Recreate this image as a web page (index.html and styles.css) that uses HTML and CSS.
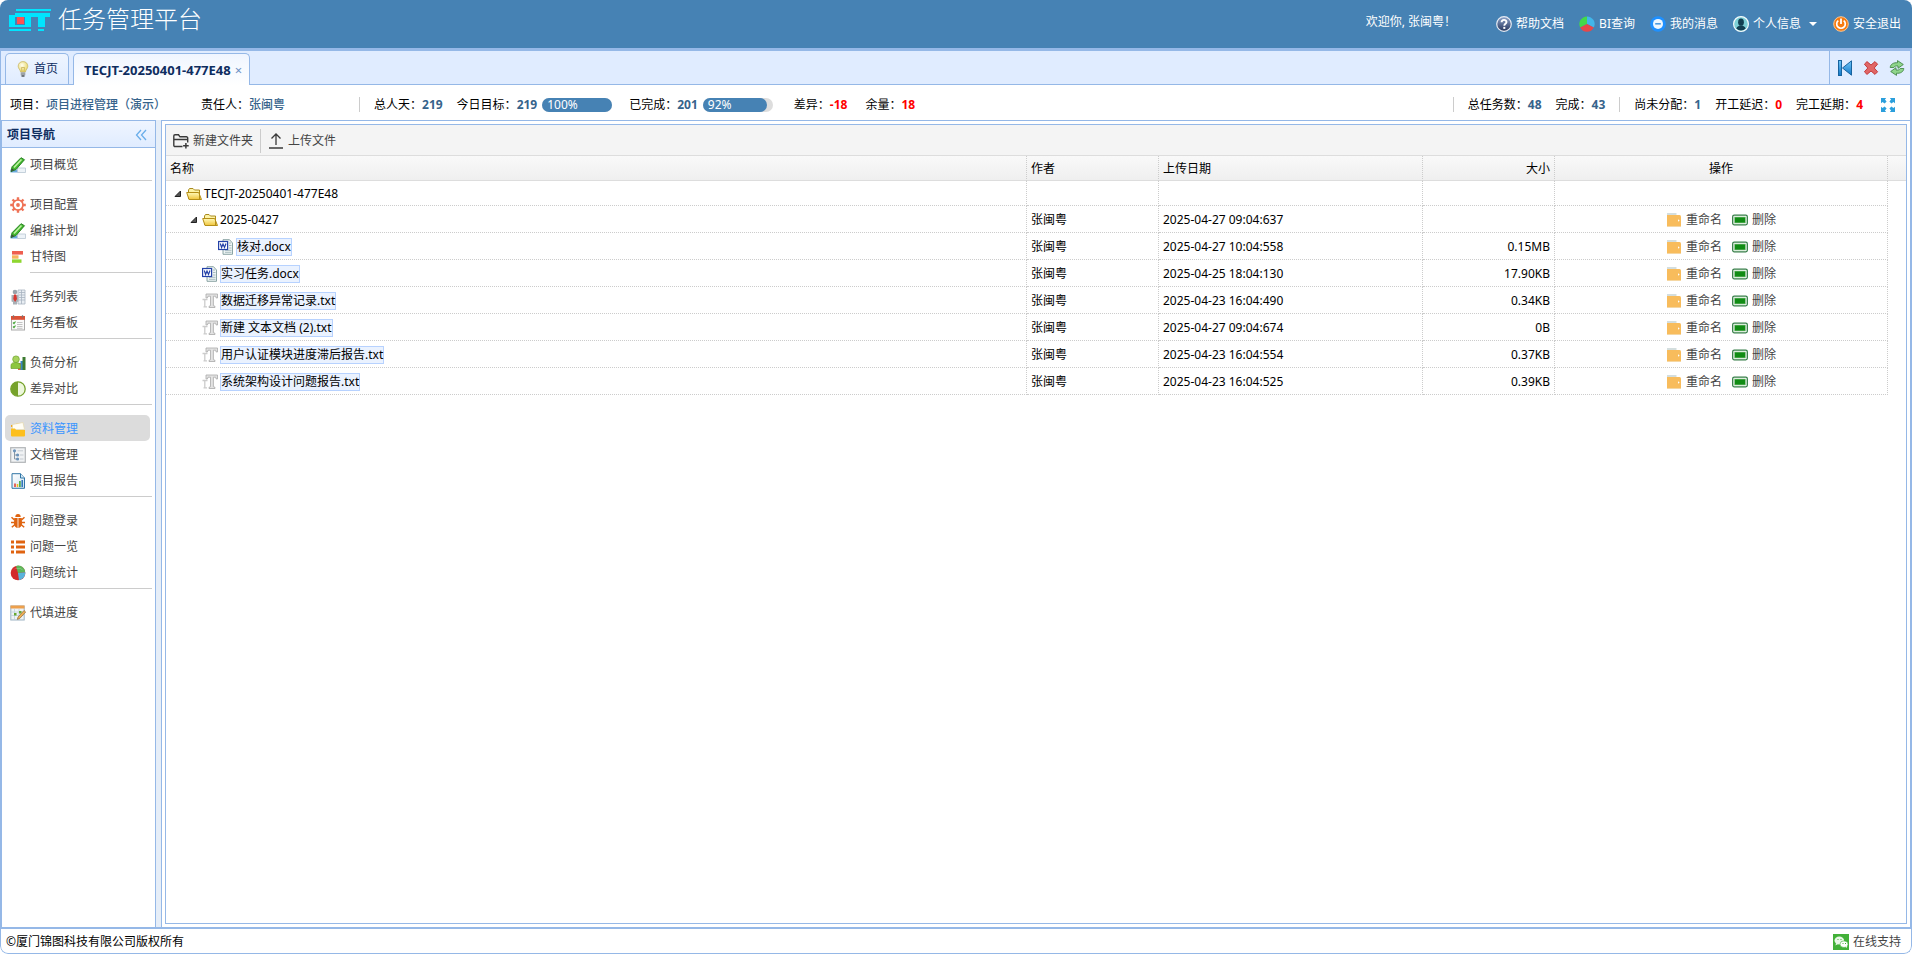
FILE: index.html
```html
<!DOCTYPE html>
<html lang="zh-CN">
<head>
<meta charset="utf-8">
<title>任务管理平台</title>
<link rel="stylesheet" href="styles.css">
</head>
<body>
<svg class="sprite" aria-hidden="true">
  <defs>
    <linearGradient id="g-folder" x1="0" y1="0" x2="0" y2="1"><stop offset="0" stop-color="#fff9b8"/><stop offset="1" stop-color="#f0c53c"/></linearGradient>
    <linearGradient id="g-blue" x1="0" y1="0" x2="0" y2="1"><stop offset="0" stop-color="#6fc6f8"/><stop offset="1" stop-color="#1478c8"/></linearGradient>
    <linearGradient id="g-steel" x1="0" y1="0" x2="0" y2="1"><stop offset="0" stop-color="#8fa5cc"/><stop offset="1" stop-color="#26355c"/></linearGradient>
    <linearGradient id="g-paper" x1="0" y1="0" x2="1" y2="1"><stop offset="0" stop-color="#ffffff"/><stop offset="1" stop-color="#cfe3f2"/></linearGradient>
    <radialGradient id="g-bulb" cx=".4" cy=".35" r=".7"><stop offset="0" stop-color="#fffef0"/><stop offset="1" stop-color="#e6d45a"/></radialGradient>
  </defs>
  <symbol id="i-help" viewBox="0 0 16 16"><circle cx="8" cy="8" r="7.3" fill="url(#g-steel)" stroke="#e6ebf3" stroke-width="1.2"/><path d="M5.6 6.3c0-3.2 4.9-3.2 4.9-.2 0 1.7-2.2 1.8-2.2 3.6" fill="none" stroke="#fff" stroke-width="1.9"/><rect x="7.3" y="10.9" width="2" height="2" fill="#fff"/></symbol>
  <symbol id="i-bi" viewBox="0 0 16 16"><path d="M8 8V.5A7.5 7.5 0 0 0 1.2 11.5z" fill="#43d94b"/><path d="M8 8V.5a7.5 7.5 0 0 1 6.8 11z" fill="#41b6ea"/><path d="M8 8l6.8 3.5a7.6 7.6 0 0 1-13.6 0z" fill="#e5484a"/></symbol>
  <symbol id="i-msg" viewBox="0 0 16 16"><circle cx="8" cy="8" r="7.8" fill="#1e90ff"/><circle cx="8" cy="7.900" r="5" fill="#eef7ff"/><rect x="5.2" y="7" width="5.6" height="1.6" fill="#4c9be0"/></symbol>
  <symbol id="i-user" viewBox="0 0 16 16"><circle cx="8" cy="8" r="7.4" fill="#7ccfd6" stroke="#f4fbfc" stroke-width="1.2"/><ellipse cx="8" cy="6.2" rx="2.9" ry="3.6" fill="#123f52"/><path d="M3.3 12.6c.6-2.1 2.4-2.2 3.3-3h2.8c.9.8 2.7.9 3.3 3-2.5 2.6-6.900 2.6-9.400 0z" fill="#123f52"/></symbol>
  <symbol id="i-power" viewBox="0 0 16 16"><circle cx="8" cy="8" r="7.3" fill="#f77b10" stroke="#fbc793"/><path d="M5.300 4.600a4.300 4.300 0 1 0 5.400 0" fill="none" stroke="#fff" stroke-width="1.700"/><path d="M8 2.500v5.500" stroke="#fff" stroke-width="1.800"/></symbol>
  <symbol id="i-bulb" viewBox="0 0 16 16"><path d="M8 .6c-3 0-4.800 2.100-4.800 4.600C3.200 7.500 5.200 8.600 5.600 11h4.800c.4-2.400 2.400-3.500 2.400-5.800C12.800 2.700 11 .6 8 .6z" fill="url(#g-bulb)" stroke="#c9b96a" stroke-width=".8"/><path d="M7 10.500L6.500 6.500h3L9 10.500" fill="none" stroke="#c4a94a" stroke-width=".7"/><rect x="5.700" y="11.300" width="4.600" height="3" fill="#9da3a8"/><rect x="6.500" y="14.300" width="3" height="1.400" fill="#454a50"/></symbol>
  <symbol id="i-first" viewBox="0 0 16 16"><rect x="1.500" y=".5" width="3" height="15" fill="url(#g-blue)" stroke="#17639e"/><path d="M14.500.8v14.400L5.500 8z" fill="url(#g-blue)" stroke="#17639e"/></symbol>
  <symbol id="i-cross" viewBox="0 0 16 16"><path d="M4 1.600L8 5l4-3.400 2.600 2.600L11.200 8l3.400 3.800-2.600 2.600L8 11l-4 3.400-2.600-2.600L4.800 8 1.400 4.200z" fill="#e06666" stroke="#c43c3c" stroke-linejoin="round"/></symbol>
  <symbol id="i-refresh" viewBox="0 0 16 16"><path d="M1.200 7.500C1.500 4 4.800 2.400 8.500 2.800L8.500.6 14.300 4.500 9 8.300V6C6.800 5.700 5.500 6.200 4.800 7.500z" fill="#8fd58b" stroke="#46884a" stroke-width=".9"/><path d="M14.800 8.500c-.3 3.500-3.600 5.100-7.300 4.700v2.200L1.700 11.500 7 7.700V10c2.200.3 3.500-.2 4.200-1.500z" fill="#8fd58b" stroke="#46884a" stroke-width=".9"/></symbol>
  <symbol id="i-expand" viewBox="0 0 16 16"><path d="M1 1h5.200L4.900 2.600 6.600 4.600 4.600 6.600 2.600 4.900 1 6.200zM15 1v5.200l-1.600-1.300-2 1.700-2-2 1.700-2L9.800 1zM1 15V9.800l1.600 1.300 2-1.700 2 2-1.700 2L6.200 15zM15 15H9.800l1.300-1.600-1.700-2 2-2 2 1.700L15 9.800z" fill="#2b9fdc"/></symbol>
  <symbol id="i-collapse" viewBox="0 0 12 12"><path d="M6 1L1.500 6 6 11M11 1L6.500 6l4.500 5" fill="none" stroke="#6aaeea" stroke-width="1.300"/></symbol>
  <symbol id="i-pencil" viewBox="0 0 16 16"><path d="M.5 12.500h9v3h-9z" fill="#6ca9de"/><path d="M7.500 11h8v4.500h-8z" fill="#edf3f8" stroke="#b9c7d3" stroke-width=".8"/><path d="M11 .7l3.500 2L6 12.500 1 14.600l1-4.800z" fill="#43b82f" stroke="#1f7a1a" stroke-width=".9"/><path d="M11.500 2.500L4 10.500" stroke="#c0f2a4" stroke-width="1.500"/><path d="M1 14.600l1-3 2.200 1.400z" fill="#444"/></symbol>
  <symbol id="i-gear" viewBox="0 0 16 16"><circle cx="8" cy="8" r="5" fill="none" stroke="#ef7256" stroke-width="1.700"/><circle cx="8" cy="8" r="1.900" fill="#ef7256"/><path d="M8 .2v3M8 12.800v3M.2 8h3M12.800 8h3M2.500 2.500l2 2M11.500 11.500l2 2M2.500 13.500l2-2M11.500 4.500l2-2" stroke="#ef7256" stroke-width="2.400"/></symbol>
  <symbol id="i-gantt" viewBox="0 0 16 16"><rect x="2" y="2" width="11" height="3.600" fill="#ee5f50"/><rect x="2" y="6.300" width="6.500" height="3.400" fill="#f6b45e"/><rect x="2" y="10.400" width="9.500" height="3.400" fill="#8ed630"/></symbol>
  <symbol id="i-list" viewBox="0 0 16 16"><path d="M8 1h7v14H8z" fill="#e9eef3" stroke="#a8b4c0" stroke-width=".8"/><path d="M9 3.500h6M9 6h6M9 8.500h6M9 11h6M11.500 1v14" stroke="#a8b4c0" stroke-width=".8"/><circle cx="5" cy="3" r="2.300" fill="#9aa3ab"/><path d="M1.500 6h7v6.500l-1.500.5v2.500H3V13l-1.500-.5z" fill="#a9b0b6"/><path d="M4 5.500h2.200L7 10l-1.900 3L3.300 10z" fill="#d9362f"/></symbol>
  <symbol id="i-board" viewBox="0 0 16 16"><rect x="1.500" y="1.500" width="13" height="13.500" fill="#fafafa" stroke="#a9a9a9"/><rect x="1" y="1" width="14" height="3.800" fill="#dc5237"/><path d="M3.500.3v2.200M12.500.3v2.200" stroke="#777" stroke-width="1.300"/><path d="M3 7.500l1 1 1.500-2M3 11.500l1 1 1.500-2" fill="none" stroke="#48a63a" stroke-width="1.200"/><path d="M7 7.500h5.500M7 9.500h5.500M7 11.500h5.500M7 13.300h5.500" stroke="#c3c3c3"/></symbol>
  <symbol id="i-load" viewBox="0 0 16 16"><rect x="8" y="8" width="3" height="7" fill="#db6a49"/><rect x="10.500" y="6" width="2.500" height="9" fill="#3986c4"/><rect x="12.500" y="2" width="3" height="13" fill="#3c7a30"/><circle cx="6" cy="4.200" r="3.300" fill="#a7d35c" stroke="#6da22d" stroke-width=".7"/><path d="M1 13.500V10.500C1 8.200 3 7.500 5.500 7.500s5 .7 5 3v3z" fill="#8dc63f" stroke="#6da22d" stroke-width=".7"/></symbol>
  <symbol id="i-diff" viewBox="0 0 16 16"><circle cx="8" cy="8" r="7.200" fill="#edf7dc" stroke="#76a22b" stroke-width="1.300"/><path d="M8 .8a7.200 7.200 0 0 0 0 14.400z" fill="#76a22b"/></symbol>
  <symbol id="i-docs" viewBox="0 0 16 16"><path d="M1 4h4l1.500-1.500H12V6H1z" fill="#f3a81c"/><path d="M2.500 3.500L13 1.500l1.500 7h-12z" fill="#fffdf4" stroke="#e5d8ac" stroke-width=".7"/><path d="M1 7.500h4l1 1.500h9v5.500a1 1 0 0 1-1 1H2a1 1 0 0 1-1-1z" fill="#fdbf1d"/></symbol>
  <symbol id="i-tree" viewBox="0 0 16 16"><rect x=".7" y=".7" width="14.600" height="14.600" fill="#f0f2f4" stroke="#b1b4b7" stroke-width="1.200"/><path d="M4.500 4v8H7M4.500 8H7" fill="none" stroke="#8b98a5"/><circle cx="4.500" cy="3.800" r="1.600" fill="#6b93ba"/><circle cx="7.600" cy="8" r="1.600" fill="#6b93ba"/><circle cx="7.600" cy="12" r="1.600" fill="#6b93ba"/><path d="M7.500 3.800H13M10 8h3.500M10 12h3.500" stroke="#c4cad0"/></symbol>
  <symbol id="i-report" viewBox="0 0 16 16"><path d="M2 .7h8.500L14.500 5v10.300H2z" fill="url(#g-paper)" stroke="#3176a6"/><path d="M10.500.7V5h4" fill="#d8e9f5" stroke="#3176a6"/><path d="M5 14v-3.500" stroke="#e0362c" stroke-width="1.500"/><path d="M7.500 14V11" stroke="#f0bd19" stroke-width="1.500"/><path d="M9.900 14V8" stroke="#36a335" stroke-width="1.500"/><path d="M12.200 14V7" stroke="#2c6fb8" stroke-width="1.500"/></symbol>
  <symbol id="i-bug" viewBox="0 0 16 16"><path d="M5.300 4a2.700 3 0 0 1 5.400 0zM4.200 5h3.400v10C5.500 14.700 4 13 4 10.500zM8.400 5h3.400l.2 5.500c0 2.500-1.500 4.200-3.600 4.500z" fill="#df6411"/><path d="M1.500 4.200L4.500 7M1 9.500h3.500M1.800 14.200L5 11.500M14.500 4.200L11.500 7M15 9.500h-3.500M14.200 14.200L11 11.500" stroke="#df6411" stroke-width="1.500"/></symbol>
  <symbol id="i-issues" viewBox="0 0 16 16"><path d="M1 1.500h3v3H1zM6 1.500h9v3H6zM1 6.500h3v3H1zM6 6.500h9v3H6zM1 11.500h3v3H1zM6 11.500h9v3H6z" fill="#e06310"/></symbol>
  <symbol id="i-pie" viewBox="0 0 16 16"><circle cx="8" cy="8" r="7.300" fill="#d22a2a"/><path d="M8 8L6 .9a7.300 7.300 0 0 1 9.300 6.300z" fill="#5cb85a"/><path d="M8 8l7.300-.8A7.300 7.300 0 0 1 9 15.200z" fill="#59b3dc"/><path d="M2.500 6a6 5 0 0 1 11 0c-2-3-8.500-3.500-11 0z" fill="#fff" opacity=".4"/></symbol>
  <symbol id="i-progress" viewBox="0 0 16 16"><rect x=".8" y="1" width="13.400" height="14" fill="#eef3f6" stroke="#9db3c4"/><rect x=".5" y=".5" width="14" height="3" fill="#eda04c"/><path d="M1 7h13M1 10.500h13M4.500 4v11M9 4v11" stroke="#bed0dd" stroke-width=".8"/><path d="M4 8h2.500v2.500H4zM9 6h2.500v2.500H9z" fill="#66a931"/><path d="M14 5.500l1.700 1.500-6 6.500-2.400.9.700-2.400z" fill="#f0b054" stroke="#8f6a3a" stroke-width=".7"/></symbol>
  <symbol id="i-newfolder" viewBox="0 0 16 16"><path d="M9.500 13.500H2a1.200 1.200 0 0 1-1.200-1.200V3A1.200 1.200 0 0 1 2 1.800h3.500L7 3.800h6.500A1.200 1.200 0 0 1 14.700 5v4.500M1 6.500h13.500" fill="none" stroke="#3a3a3a" stroke-width="1.400"/><path d="M12.900 10v5.600M10.100 12.800h5.600" stroke="#3a3a3a" stroke-width="1.500"/></symbol>
  <symbol id="i-upload" viewBox="0 0 16 16"><path d="M8 12V1M3.500 5.500L8 1l4.500 4.500M1 15h14" fill="none" stroke="#3a3a3a" stroke-width="1.300"/></symbol>
  <symbol id="i-folder" viewBox="0 0 16 16"><path d="M2.500 13V4l1-1.500H7L8.500 4h5v3" fill="#fdf3a5" stroke="#a98a20"/><path d="M.7 6.500h12l2.800 7H3z" fill="url(#g-folder)" stroke="#b58f18"/><path d="M13.500 5v8" stroke="#b58f18"/></symbol>
  <symbol id="i-word" viewBox="0 0 16 16"><path d="M5 .7h6.500L14.500 4v11.300H5z" fill="#eef4f4" stroke="#7e9a9a" stroke-width=".9"/><path d="M11 4h2M11 6.500h2.500M11 9h2.500M7 11.300h6.500M7 13.300h6.500" stroke="#9fb5b9" stroke-width=".9"/><rect x=".6" y="2.500" width="9" height="8" fill="#fff" stroke="#2442a8" stroke-width="1.200"/><path d="M2.300 4.500l1.300 4L5 5l1.500 3.500L8 4.500" fill="none" stroke="#2442a8" stroke-width="1.200"/></symbol>
  <symbol id="i-text" viewBox="0 0 16 16"><path d="M4 1h11.500v4h-1.300l-.5-1.800h-2.300v9.500l1.600.6V14.500H7v-1.200l1.500-.6V3.200H6L5.400 5H4z" fill="#e3e3e3" stroke="#a9a9a9" stroke-width=".8"/><path d="M.5 6.500H5.500M2.800 6.500v7M1.500 13.800h3.500" stroke="#cccccc" stroke-width="1.300"/></symbol>
  <symbol id="i-rename" viewBox="0 0 16 16"><path d="M1 1h9.500v3H1z" fill="#d4dede"/><path d="M1 3h12.500A1.500 1.500 0 0 1 15 4.500V15H1z" fill="#f8bc5c"/><rect x="1" y="14" width="14" height="1" fill="#f5d7a3"/><path d="M12 7.300l1.700 1.200-1.700 1.200z" fill="#fff"/></symbol>
  <symbol id="i-delete" viewBox="0 0 16 16"><rect x=".7" y="3.200" width="14.600" height="9.600" rx="1.500" fill="#fff" stroke="#347d46" stroke-width="1.300"/><rect x="2.500" y="5" width="11" height="6" fill="#118c14" stroke="#9bcf9b" stroke-width=".7"/></symbol>
  <symbol id="i-wechat" viewBox="0 0 16 16"><rect width="16" height="16" fill="#42b038"/><ellipse cx="6.300" cy="6.500" rx="4.800" ry="4" fill="#e9f7e7"/><path d="M3 9l-.5 2.500L5 10z" fill="#e9f7e7"/><ellipse cx="11" cy="10.200" rx="4" ry="3.300" fill="#fff" stroke="#42b038" stroke-width=".6"/><path d="M12.500 12.500l1.500 1.800-.3-2.500z" fill="#fff"/><path d="M4.500 5.500h1M7.500 5.500h1M9.500 9.500h1M12 9.500h1" stroke="#42b038" stroke-width="1.100"/></symbol>
  <symbol id="i-arrow" viewBox="0 0 8 8"><path d="M6.500 1v5.500H1z" fill="#555" stroke="#222"/></symbol>
</svg>

<div class="app">
  <header class="banner">
    <svg class="logo" viewBox="0 0 42 22" aria-hidden="true"><path d="M7 0h35v2H7zM0 20h22v2H0zM0 6h6v10h10V8H6V4h35v4h-5v10h-7V8h-7v10H0zM29 20h6v2h-6z" fill="#00e5ff"/><rect x="8" y="8" width="7" height="7" fill="#ff5252"/></svg>
    <h1 class="brand">任务管理平台</h1>
    <span class="welcome">欢迎你, 张闽粤！</span>
    <nav class="links">
      <a href="#help"><svg class="icon"><use href="#i-help"/></svg>帮助文档</a>
      <a href="#bi"><svg class="icon"><use href="#i-bi"/></svg>BI查询</a>
      <a href="#msg"><svg class="icon"><use href="#i-msg"/></svg>我的消息</a>
      <a href="#me"><svg class="icon"><use href="#i-user"/></svg>个人信息<span class="caret"></span></a>
      <a href="#exit"><svg class="icon"><use href="#i-power"/></svg>安全退出</a>
    </nav>
  </header>

  <div class="tabs">
    <div class="tab-list">
      <button class="tab tab-home" type="button"><svg class="icon"><use href="#i-bulb"/></svg>首页</button>
      <button class="tab tab-active" type="button">TECJT-20250401-477E48<span class="tab-close">×</span></button>
    </div>
    <div class="tab-tools">
      <button type="button" aria-label="首页"><svg class="icon"><use href="#i-first"/></svg></button>
      <button type="button" aria-label="关闭"><svg class="icon"><use href="#i-cross"/></svg></button>
      <button type="button" aria-label="刷新"><svg class="icon"><use href="#i-refresh"/></svg></button>
    </div>
  </div>

  <div class="status">
    <span class="stat stat-project">项目：<b>项目进程管理（演示）</b></span>
    <span class="stat stat-owner">责任人：<b>张闽粤</b></span>
    <i class="rule"></i>
    <span class="stat">总人天：<b>219</b></span>
    <span class="stat">今日目标：<b>219</b><span class="meter"><span class="meter-fill" style="width:100%">100%</span></span></span>
    <span class="stat">已完成：<b>201</b><span class="meter"><span class="meter-fill" style="width:92%">92%</span></span></span>
    <span class="stat stat-wide">差异：<b class="warn">-18</b></span>
    <span class="stat stat-wide">余量：<b class="warn">18</b></span>
    <i class="rule push"></i>
    <span class="stat">总任务数：<b>48</b></span>
    <span class="stat">完成：<b>43</b></span>
    <i class="rule"></i>
    <span class="stat">尚未分配：<b>1</b></span>
    <span class="stat">开工延迟：<b class="warn">0</b></span>
    <span class="stat">完工延期：<b class="warn">4</b></span>
    <button class="expand" type="button" aria-label="全屏"><svg class="icon"><use href="#i-expand"/></svg></button>
  </div>

  <div class="body">
    <aside class="side">
      <div class="side-head"><h2>项目导航</h2><button type="button" aria-label="收起"><svg class="icon-s"><use href="#i-collapse"/></svg></button></div>
      <nav class="menu">
        <a href="#1"><svg class="icon"><use href="#i-pencil"/></svg>项目概览</a>
        <hr>
        <a href="#2"><svg class="icon"><use href="#i-gear"/></svg>项目配置</a>
        <a href="#3"><svg class="icon"><use href="#i-pencil"/></svg>编排计划</a>
        <a href="#4"><svg class="icon"><use href="#i-gantt"/></svg>甘特图</a>
        <hr>
        <a href="#5"><svg class="icon"><use href="#i-list"/></svg>任务列表</a>
        <a href="#6"><svg class="icon"><use href="#i-board"/></svg>任务看板</a>
        <hr>
        <a href="#7"><svg class="icon"><use href="#i-load"/></svg>负荷分析</a>
        <a href="#8"><svg class="icon"><use href="#i-diff"/></svg>差异对比</a>
        <hr>
        <a href="#9" class="current"><svg class="icon"><use href="#i-docs"/></svg>资料管理</a>
        <a href="#10"><svg class="icon"><use href="#i-tree"/></svg>文档管理</a>
        <a href="#11"><svg class="icon"><use href="#i-report"/></svg>项目报告</a>
        <hr>
        <a href="#12"><svg class="icon"><use href="#i-bug"/></svg>问题登录</a>
        <a href="#13"><svg class="icon"><use href="#i-issues"/></svg>问题一览</a>
        <a href="#14"><svg class="icon"><use href="#i-pie"/></svg>问题统计</a>
        <hr>
        <a href="#15"><svg class="icon"><use href="#i-progress"/></svg>代填进度</a>
      </nav>
    </aside>

    <main class="center">
      <section class="grid">
        <div class="toolbar">
          <button type="button"><svg class="icon"><use href="#i-newfolder"/></svg>新建文件夹</button>
          <i class="bar-rule"></i>
          <button type="button"><svg class="icon"><use href="#i-upload"/></svg>上传文件</button>
        </div>
        <table class="files">
          <colgroup><col><col class="c-author"><col class="c-date"><col class="c-size"><col class="c-ops"><col class="c-end"></colgroup>
          <thead>
            <tr><th>名称</th><th>作者</th><th>上传日期</th><th class="right">大小</th><th class="mid">操作</th><th></th></tr>
          </thead>
          <tbody>
            <tr class="root"><td><span class="node l1"><svg class="arrow"><use href="#i-arrow"/></svg><svg class="icon"><use href="#i-folder"/></svg>TECJT-20250401-477E48</span></td><td></td><td></td><td></td><td></td><td></td></tr>
            <tr><td><span class="node l2"><svg class="arrow"><use href="#i-arrow"/></svg><svg class="icon"><use href="#i-folder"/></svg>2025-0427</span></td><td>张闽粤</td><td>2025-04-27 09:04:637</td><td></td><td class="mid"><a class="op" href="#r"><svg class="icon"><use href="#i-rename"/></svg>重命名</a><a class="op" href="#d"><svg class="icon"><use href="#i-delete"/></svg>删除</a></td><td></td></tr>
            <tr><td><span class="node l3"><svg class="icon"><use href="#i-word"/></svg><a class="file" href="#f">核对.docx</a></span></td><td>张闽粤</td><td>2025-04-27 10:04:558</td><td class="right">0.15MB</td><td class="mid"><a class="op" href="#r"><svg class="icon"><use href="#i-rename"/></svg>重命名</a><a class="op" href="#d"><svg class="icon"><use href="#i-delete"/></svg>删除</a></td><td></td></tr>
            <tr><td><span class="node l2f"><svg class="icon"><use href="#i-word"/></svg><a class="file" href="#f">实习任务.docx</a></span></td><td>张闽粤</td><td>2025-04-25 18:04:130</td><td class="right">17.90KB</td><td class="mid"><a class="op" href="#r"><svg class="icon"><use href="#i-rename"/></svg>重命名</a><a class="op" href="#d"><svg class="icon"><use href="#i-delete"/></svg>删除</a></td><td></td></tr>
            <tr><td><span class="node l2f"><svg class="icon"><use href="#i-text"/></svg><a class="file" href="#f">数据迁移异常记录.txt</a></span></td><td>张闽粤</td><td>2025-04-23 16:04:490</td><td class="right">0.34KB</td><td class="mid"><a class="op" href="#r"><svg class="icon"><use href="#i-rename"/></svg>重命名</a><a class="op" href="#d"><svg class="icon"><use href="#i-delete"/></svg>删除</a></td><td></td></tr>
            <tr><td><span class="node l2f"><svg class="icon"><use href="#i-text"/></svg><a class="file" href="#f">新建 文本文档 (2).txt</a></span></td><td>张闽粤</td><td>2025-04-27 09:04:674</td><td class="right">0B</td><td class="mid"><a class="op" href="#r"><svg class="icon"><use href="#i-rename"/></svg>重命名</a><a class="op" href="#d"><svg class="icon"><use href="#i-delete"/></svg>删除</a></td><td></td></tr>
            <tr><td><span class="node l2f"><svg class="icon"><use href="#i-text"/></svg><a class="file" href="#f">用户认证模块进度滞后报告.txt</a></span></td><td>张闽粤</td><td>2025-04-23 16:04:554</td><td class="right">0.37KB</td><td class="mid"><a class="op" href="#r"><svg class="icon"><use href="#i-rename"/></svg>重命名</a><a class="op" href="#d"><svg class="icon"><use href="#i-delete"/></svg>删除</a></td><td></td></tr>
            <tr><td><span class="node l2f"><svg class="icon"><use href="#i-text"/></svg><a class="file" href="#f">系统架构设计问题报告.txt</a></span></td><td>张闽粤</td><td>2025-04-23 16:04:525</td><td class="right">0.39KB</td><td class="mid"><a class="op" href="#r"><svg class="icon"><use href="#i-rename"/></svg>重命名</a><a class="op" href="#d"><svg class="icon"><use href="#i-delete"/></svg>删除</a></td><td></td></tr>
          </tbody>
        </table>
      </section>
    </main>
  </div>

  <footer class="foot">
    <span>©厦门锦图科技有限公司版权所有</span>
    <a href="#support"><svg class="icon"><use href="#i-wechat"/></svg>在线支持</a>
  </footer>
</div>
</body>
</html>
```
FILE: styles.css
```css
* { box-sizing: border-box; }

:root {
  --line: #95b8e7;
  --pale: #e0ecff;
  --steel: #4682b4;
  --navy: #0e2d5f;
}

body {
  margin: 0;
  background: #fff;
  color: #000;
  font: 12px/18px "Noto Sans", "Noto Sans CJK SC", sans-serif;
}

button {
  margin: 0;
  padding: 0;
  border: 0;
  background: none;
  color: inherit;
  font: inherit;
  cursor: pointer;
}

a { color: inherit; text-decoration: none; }

svg { display: block; flex: none; }

.sprite { position: absolute; width: 0; height: 0; }
.icon { width: 16px; height: 16px; }
.icon-s { width: 12px; height: 12px; }

.app {
  display: flex;
  flex-direction: column;
  height: 100vh;
  border-radius: 8px;
  overflow: hidden;
}

/* Banner */
.banner {
  display: flex;
  align-items: flex-start;
  height: 51px;
  flex: none;
  padding: 0 11px 0 9px;
  background: var(--steel);
  border-bottom: 3px solid var(--line);
  color: #fff;
}
.logo { width: 42px; height: 22px; margin-top: 9px; }
.brand {
  margin: 3px auto 0 7px;
  font-size: 24px;
  font-weight: 300;
  line-height: 32px;
}
.welcome { margin: 13px 40px 0 0; }
.links { display: flex; gap: 15px; margin-top: 15px; }
.links a { display: flex; align-items: center; gap: 4px; }
.caret {
  margin: 0 1px 0 4px;
  border: 4px solid transparent;
  border-top-color: #fff;
  border-bottom: 0;
}

/* Tabs */
.tabs {
  display: flex;
  flex: none;
  height: 34px;
  background: var(--pale);
  border: solid var(--line);
  border-width: 0 2px 0 1px;
}
.tab-list {
  display: flex;
  flex: 1;
  align-items: flex-end;
  gap: 4px;
  padding-left: 4px;
  border-bottom: 1px solid var(--line);
}
.tab {
  display: flex;
  align-items: center;
  gap: 3px;
  height: 31px;
  padding: 0 10px 0 9px;
  border: 1px solid var(--line);
  border-bottom: 0;
  border-radius: 5px 5px 0 0;
  background: linear-gradient(#eff5ff, #e0ecff);
  color: var(--navy);
}
.tab-active {
  gap: 4px;
  height: 32px;
  margin-bottom: -1px;
  background: linear-gradient(#eff5ff, #fff);
  font-size: 13px;
  font-weight: bold;
  padding: 0 7px 0 10px;
}
.tab-close { color: #6c8fc4; font-weight: normal; }
.tab-tools {
  display: flex;
  align-items: center;
  gap: 10px;
  padding: 0 5px 0 7px;
  border: solid var(--line);
  border-width: 0 0 1px 1px;
}

/* Project figures */
.status {
  display: flex;
  align-items: center;
  gap: 14px;
  flex: none;
  height: 35px;
  padding: 4px 14px 0 9px;
  border: solid var(--line);
  border-width: 0 2px 0 1px;
  white-space: nowrap;
}
.stat { display: flex; align-items: center; }
.stat b { color: #36638b; }
.stat .warn { color: #f00; }
.stat-project { width: 177px; }
.stat-owner { width: 144px; }
.stat-project b, .stat-owner b { font-weight: 500; }
.rule { width: 1px; height: 15px; background: #ccc; }
.push { margin-left: auto; }
.stat-wide { margin-left: 4px; }
.meter {
  width: 70px;
  margin: 0 3px 0 5px;
  border-radius: 7px;
  background: #ddd;
}
.meter-fill {
  display: block;
  padding-left: 5px;
  border-radius: 7px;
  background: var(--steel);
  color: #fff;
  line-height: 14px;
}
.expand { margin-left: 3px; }

/* Work area */
.body {
  display: flex;
  flex: 1;
  gap: 5px;
  min-height: 0;
  border: solid var(--line);
  border-width: 0 2px 2px 1px;
  background: #e6eef8;
}
.side {
  width: 155px;
  flex: none;
  background: #fff;
  border: 1px solid var(--line);
  border-bottom: 0;
}
.side-head {
  display: flex;
  align-items: center;
  justify-content: space-between;
  height: 27px;
  padding: 2px 8px 0 5px;
  background: linear-gradient(#eff5ff, #e0ecff);
  border-bottom: 1px solid var(--line);
}
.side-head h2 {
  margin: 0;
  color: var(--navy);
  font-size: 12px;
  font-weight: bold;
}
.menu { padding: 3px 3px 0; }
.menu a {
  display: flex;
  align-items: center;
  gap: 4px;
  height: 26px;
  margin-right: 2px;
  padding: 2px 0 0 5px;
  border-radius: 5px;
  color: #444;
}
.menu .current { background: #dcdcdc; color: #3a95ff; }
.menu hr {
  height: 1px;
  margin: 3px 0 10px 25px;
  border: 0;
  background: #ccc;
}
.center {
  flex: 1;
  min-width: 0;
  padding: 3px;
  background: #fff;
  border: solid var(--line);
  border-width: 1px 0 0 1px;
}
.grid { height: 100%; border: 1px solid var(--line); }
.toolbar {
  display: flex;
  align-items: center;
  gap: 7px;
  height: 31px;
  padding: 2px 7px 0;
  background: #f4f4f4;
  border-bottom: 1px solid #ddd;
  color: #444;
}
.toolbar button { display: flex; align-items: center; gap: 4px; }
.bar-rule { width: 1px; height: 24px; background: #ccc; }

/* File tree table */
.files {
  width: 100%;
  table-layout: fixed;
  border-collapse: separate;
  border-spacing: 0;
}
.c-author, .c-size { width: 132px; }
.c-date { width: 264px; }
.c-ops { width: 333px; }
.c-end { width: 18px; }
.files th {
  height: 25px;
  padding: 2px 4px 0;
  background: linear-gradient(#f9f9f9, #efefef);
  border-right: 1px dotted #ccc;
  border-bottom: 1px solid #ddd;
  font-weight: normal;
  text-align: left;
}
.files td {
  height: 27px;
  padding: 2px 4px 0;
  border-right: 1px dotted #ccc;
  border-bottom: 1px dotted #ccc;
}
.files .root td { height: 25px; }
.files th:last-child, .files td:last-child { border-right: 0; }
.files td:last-child { border-bottom: 0; }
.files .right { text-align: right; }
.files .mid { text-align: center; }
.node { display: flex; align-items: center; gap: 2px; }
.arrow { width: 8px; height: 8px; margin-right: 2px; }
.l1 { padding-left: 4px; }
.l2 { padding-left: 20px; }
.l2f { padding-left: 32px; }
.l3 { padding-left: 48px; }
.file {
  height: 18px;
  border: 1px solid #b7d2ff;
  background: #eaf2ff;
  line-height: 16px;
}
.op {
  display: inline-flex;
  align-items: center;
  gap: 4px;
  color: #444;
  vertical-align: middle;
}
.op + .op { margin-left: 10px; }

/* Footer */
.foot {
  display: flex;
  align-items: center;
  justify-content: space-between;
  flex: none;
  height: 25px;
  padding: 2px 10px 0 5px;
  border: solid var(--line);
  border-width: 0 1px 1px 1px;
  border-radius: 0 0 8px 8px;
}
.foot a { display: flex; align-items: center; gap: 4px; color: #444; }
```
